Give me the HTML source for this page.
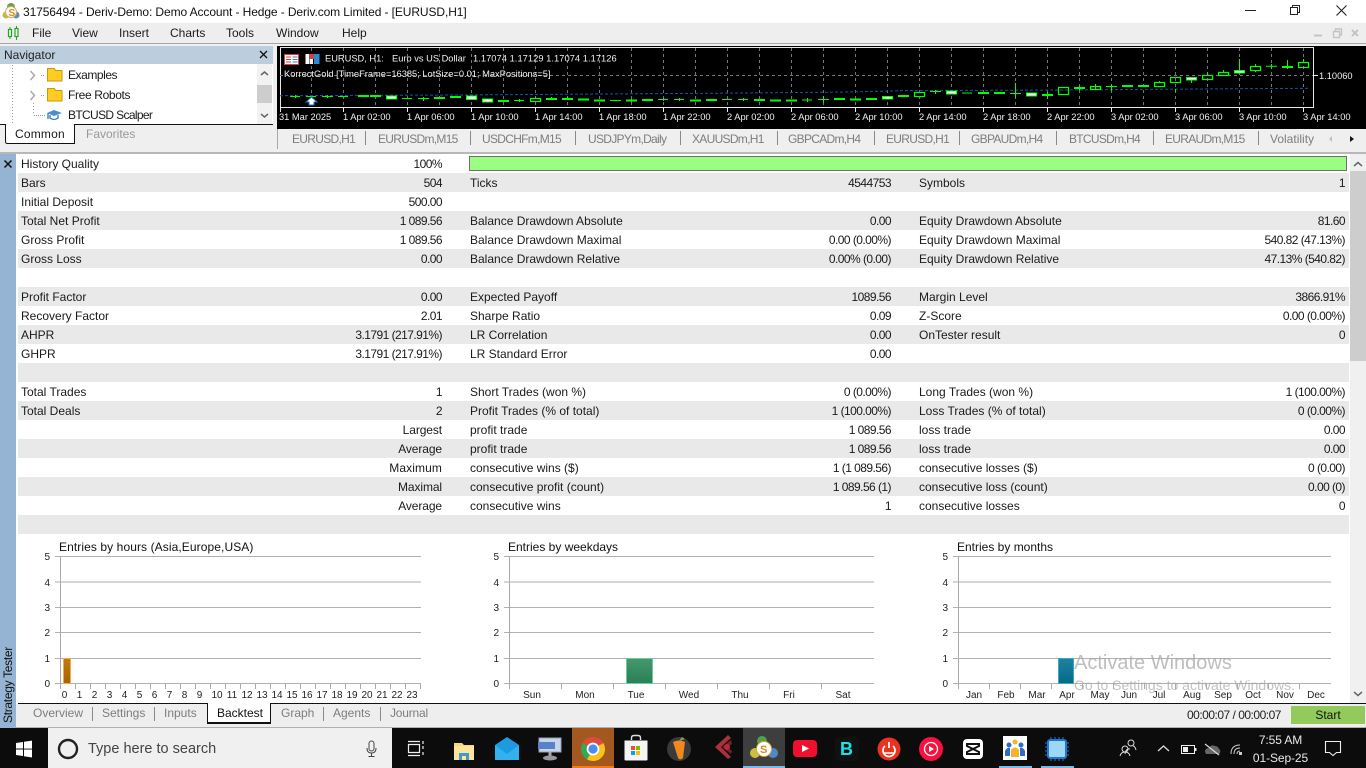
<!DOCTYPE html>
<html><head><meta charset="utf-8"><title>Strategy Tester</title>
<style>
*{box-sizing:border-box}
html,body{margin:0;padding:0;width:1366px;height:768px;overflow:hidden;background:#fff;font-family:"Liberation Sans",sans-serif;font-size:12px;color:#1a1a1a}
.a{position:absolute;white-space:nowrap}
.t{position:absolute;white-space:nowrap;line-height:16px}
.g{color:#7d7d7d}
.k{letter-spacing:-.7px}
.sep{position:absolute;width:1px;background:#8a8a8a}
.r{position:absolute;left:18px;width:1331px;height:19px;line-height:19px}
.r.o{background:#e9e9e9}
.r span{position:absolute;white-space:nowrap;top:1px}
.l1{left:3px}.v1{right:907px;letter-spacing:-.55px}.l2{left:452px}.v2{right:458px;letter-spacing:-.55px}.l3{left:901px}.v3{right:4px;letter-spacing:-.55px}
.r span.w{letter-spacing:-.1px}
svg{position:absolute;left:0;top:0}
svg text{font-family:"Liberation Sans",sans-serif}
</style></head><body>

<div class="a" style="left:0;top:0;width:1366px;height:23px;background:#fff"></div>
<svg width="1366" height="44" style="z-index:2">
 <circle cx="11" cy="7" r="4" fill="#6a9e5a"/><circle cx="6" cy="15" r="3.500" fill="#c4b84a"/><circle cx="16" cy="15" r="3.500" fill="#5f8fbf"/><circle cx="11" cy="12" r="5.500" fill="#fff" stroke="#e0a850"/>
 <text x="8.500" y="16" font-size="10" font-weight="bold" fill="#d58a20">S</text>
 <path d="M1245 10.500h11" stroke="#222" stroke-width="1"/>
 <path d="M1290.500 7.500h7v7h-7zM1292.500 7.500v-2h7v7h-2" fill="none" stroke="#222"/>
 <path d="M1336.500 5.500l10 10M1346.500 5.500l-10 10" stroke="#222" stroke-width="1.100"/>
</svg>
<div class="t" style="left:23px;top:4px;color:#111;letter-spacing:-.1px">31756494 - Deriv-Demo: Demo Account - Hedge - Deriv.com Limited - [EURUSD,H1]</div>

<div class="a" style="left:0;top:23px;width:1366px;height:20px;background:#eeeeee"></div>
<div class="a" style="left:0;top:43px;width:1366px;height:1px;background:#a8a8a8"></div>
<div class="a" style="left:0;top:44px;width:1366px;height:110px;background:#efefef"></div>
<svg width="30" height="44" style="z-index:2">
 <path d="M10 27v12M16.500 26v14" stroke="#1fa51f"/><rect x="8.500" y="29.500" width="3" height="7" fill="#fff" stroke="#1fa51f" stroke-width="1.200"/><rect x="15" y="28.500" width="3" height="8" fill="#fff" stroke="#1fa51f" stroke-width="1.200"/>
</svg>
<div class="t" style="left:32px;top:25px">File</div>
<div class="t" style="left:72px;top:25px">View</div>
<div class="t" style="left:119px;top:25px">Insert</div>
<div class="t" style="left:170px;top:25px">Charts</div>
<div class="t" style="left:226px;top:25px">Tools</div>
<div class="t" style="left:276px;top:25px">Window</div>
<div class="t" style="left:342px;top:25px">Help</div>
<svg width="1366" height="44" style="z-index:2">
 <path d="M1314 35.500h8" stroke="#c4c4c4" stroke-width="2"/>
 <path d="M1333.500 31.500h6v6h-6zM1335.500 31v-2h6v6h-2" fill="none" stroke="#c4c4c4" stroke-width="1.400"/>
 <path d="M1352 30l6 6M1358 30l-6 6" stroke="#c4c4c4" stroke-width="2"/>
</svg>

<!-- Navigator -->
<div class="a" style="left:0;top:46px;width:273px;height:18px;background:#bccddd"></div>
<div class="t" style="left:4px;top:47px;color:#222">Navigator</div>
<svg width="280" height="150" style="z-index:2">
 <path d="M260 51l7 7M267 51l-7 7" stroke="#111" stroke-width="1.300"/>
</svg>
<div class="a" style="left:0;top:64px;width:273px;height:60px;background:#fff"></div>
<div class="a" style="left:257px;top:64px;width:15px;height:60px;background:#f2f2f2"></div>
<div class="a" style="left:257px;top:85px;width:15px;height:18px;background:#cdcdcd"></div>
<svg width="280" height="150" style="z-index:2">
 <path d="M12.500 65v60M33.500 103v12" stroke="#999" stroke-dasharray="1 2"/>
 <path d="M30.500 71l4 4.500-4 4.500M30.500 91l4 4.500-4 4.500" fill="none" stroke="#aaa" stroke-width="1.500"/>
 <path d="M41 75.500h3M41 95.500h3M34 115.500h12" stroke="#999" stroke-dasharray="1 1"/>
 <path d="M47.500 68.500h7l1 2h6.500v10.500h-14.500z" fill="#ffcc22" stroke="#c89a10"/>
 <path d="M47.500 88.500h7l1 2h6.500v10.500h-14.500z" fill="#ffcc22" stroke="#c89a10"/>
 <path d="M47 113l7-3 8 3-8 3z" fill="#4a90c8"/><path d="M50 115v3q4 3 8 0v-3M48 113v6" fill="none" stroke="#2f78b8" stroke-width="1.300"/>
 <path d="M261 75l3.500-3 3.500 3" fill="none" stroke="#666" stroke-width="1.500"/>
 <path d="M261 114l3.500 3 3.500-3" fill="none" stroke="#666" stroke-width="1.500"/>
 <path d="M0 124.500h273" stroke="#111"/>
 <path d="M5.500 124.500v17q0 2 2 2h67v-19" fill="#fff" stroke="#111"/>
 <path d="M6 124h68v1h-68z" fill="#fff"/>
</svg>
<div class="t" style="left:68px;top:67px;z-index:3;letter-spacing:-.45px">Examples</div>
<div class="t" style="left:68px;top:87px;z-index:3;letter-spacing:-.35px">Free Robots</div>
<div class="t" style="left:68px;top:107px;z-index:3;letter-spacing:-.65px">BTCUSD Scalper</div>
<div class="t" style="left:15px;top:126px;z-index:3;letter-spacing:.2px">Common</div>
<div class="t g" style="left:86px;top:126px;z-index:3;color:#999">Favorites</div>

<!-- Chart -->
<div class="a" style="left:277px;top:46px;width:1089px;height:83px;background:#000"></div>
<svg width="1366" height="130" style="z-index:2" font-size="9.300">
 <path d="M280.500 47.500H1313.500V107.500H280.500z" fill="none" stroke="#e8e8e8"/>
 <path d="M280 75.500H1313" stroke="#777" stroke-dasharray="3 3"/>
 <path stroke="#6d7580" stroke-dasharray="3 3" d="M311.500 48v59M343.500 48v59M375.500 48v59M407.500 48v59M439.500 48v59M471.500 48v59M503.500 48v59M535.500 48v59M567.500 48v59M599.500 48v59M631.500 48v59M663.500 48v59M695.500 48v59M727.500 48v59M759.500 48v59M791.500 48v59M823.500 48v59M855.500 48v59M887.500 48v59M919.500 48v59M951.500 48v59M983.500 48v59M1015.500 48v59M1047.500 48v59M1079.500 48v59M1111.500 48v59M1143.500 48v59M1175.500 48v59M1207.500 48v59M1239.500 48v59M1271.500 48v59M1303.500 48v59"/>
 <path d="M280 95.700L460 95L745 93L850 92L900 90.700L1060 90L1240 88.700L1310 88.300" fill="none" stroke="#0b5aa8" stroke-dasharray="3 2"/>
 <path stroke="#e8e8e8" d="M280.500 107v5M343.500 107v5M407.500 107v5M471.500 107v5M535.500 107v5M599.500 107v5M663.500 107v5M727.500 107v5M791.500 107v5M855.500 107v5M919.500 107v5M983.500 107v5M1047.500 107v5M1111.500 107v5M1175.500 107v5M1239.500 107v5M1303.500 107v5M1313 75.500h5"/>
 <!-- thin candles -->
 <path stroke="#00ff00" fill="none" d="M290 96.500h10M295.500 95v3M306 96.500h10M322 96.500h11M327.500 95v3M338 96.500h10M402 98.500h10M418 98.500h11M423.500 97v4M514 100.500h10M519.500 99v3M610 100.500h11M658 99.500h10M663.500 98v3M674 99.500h10M679.500 98v3M722 99.500h10M738 99.500h10M743.500 98v3M802 100h10M807.500 98v4M818 99.500h11M823.500 96v7M930 91.500h11M935.500 90v4M962 93h10M1010 93.500h11M1015.500 83v15M1106 86.500h11M1111.500 84v7M1266 66.300h11M1271.500 64v5M1287.500 60v9M551.500 97v3M567.500 97v3M535.500 97v2M631.500 99v3M1079.500 86v4M1047.500 92v7M1095.500 84v6M1159.500 81v2M1175.500 89v3M1191.500 82v1M1191.500 80v3M1207.500 72v3M1223.500 70v3M1239.500 59v11M1255.500 64v2M1255.500 70v2M1303.500 59v4"/>
 <!-- thick candles -->
 <path stroke="#00ff00" stroke-width="2" d="M358 96h11M370 96h11M434 98h11M450 97h11M498 101h11M546 99h11M562 99h11M578 99.500h11M594 100.500h11M626 100.500h11M642 100h11M690 100.500h11M706 100h11M754 100h11M770 100.500h11M786 100.500h11M834 99h11M850 99.500h11M866 99h11M898 96h11M978 93h11M994 93h11M1042 95h11M1074 88h11M1122 86h11M1138 86h11M1282 67h11"/>
 <!-- hollow -->
 <g fill="none" stroke="#00ff00" stroke-width="1.200">
  <rect x="530.500" y="98.500" width="10" height="3"/><rect x="914.500" y="92.500" width="10" height="4"/>
  <rect x="1058.500" y="87.500" width="10" height="7"/><rect x="1090.500" y="86.500" width="10" height="3"/>
  <rect x="1154.500" y="82.500" width="10" height="4"/><rect x="1170.500" y="77.500" width="10" height="5"/>
  <rect x="1202.500" y="75.500" width="10" height="4"/>
  <rect x="1218.500" y="72.500" width="10" height="3"/><rect x="1250.500" y="66.500" width="10" height="4"/>
  <rect x="1298.500" y="62.500" width="10" height="5"/>
 </g>
 <!-- white filled -->
 <g fill="#fff" stroke="#00ff00">
  <rect x="386.500" y="96" width="10" height="3"/><rect x="466.500" y="96" width="10" height="3.500"/><rect x="482.500" y="99" width="10" height="3"/>
  <rect x="882.500" y="96.500" width="10" height="2.500"/><rect x="946.500" y="91" width="10" height="3"/><rect x="1026.500" y="93" width="10" height="3"/>
  <rect x="1186.500" y="77.500" width="10" height="2.500"/><rect x="1234.500" y="70.500" width="10" height="2.500"/>
 </g>
 <path d="M311.500 97l5.500 5h-3v3h-5v-3h-3z" fill="#fff" stroke="#1b6fc0"/>
 <rect x="284.500" y="54.500" width="14" height="10" fill="#fff" stroke="#d04040"/><path d="M286 57h5M286 59.500h5M286 62h5" stroke="#d04040"/><path d="M292.500 57h5M292.500 59.500h5M292.500 62h5" stroke="#3a78c8"/>
 <rect x="305.500" y="54" width="4" height="10" fill="#fff"/><rect x="309" y="54" width="5" height="5" fill="#d04040"/><rect x="314" y="54" width="5.500" height="10" fill="#2f88d0"/><rect x="310" y="59" width="3" height="5" fill="#fff"/>
 <g fill="#f0f0f0">
  <text x="325" y="61.500">EURUSD, H1:</text>
  <text x="392" y="61.500">Euro vs US Dollar</text>
  <text x="473" y="61.500" letter-spacing=".05">1.17074 1.17129 1.17074 1.17126</text>
  <text x="284" y="77" letter-spacing="0">KorrectGold [TimeFrame=16385; LotSize=0.01; MaxPositions=5]</text>
  <text x="1319" y="79">1.10060</text>
  <text x="279" y="120">31 Mar 2025</text>
  <text x="343" y="120">1 Apr 02:00</text><text x="407" y="120">1 Apr 06:00</text><text x="471" y="120">1 Apr 10:00</text><text x="535" y="120">1 Apr 14:00</text><text x="599" y="120">1 Apr 18:00</text><text x="663" y="120">1 Apr 22:00</text>
  <text x="727" y="120">2 Apr 02:00</text><text x="791" y="120">2 Apr 06:00</text><text x="855" y="120">2 Apr 10:00</text><text x="919" y="120">2 Apr 14:00</text><text x="983" y="120">2 Apr 18:00</text><text x="1047" y="120">2 Apr 22:00</text>
  <text x="1111" y="120">3 Apr 02:00</text><text x="1175" y="120">3 Apr 06:00</text><text x="1239" y="120">3 Apr 10:00</text><text x="1303" y="120">3 Apr 14:00</text>
 </g>
</svg>

<!-- Chart tabs -->
<div class="sep" style="left:277px;top:129px;height:20px;background:#aaa"></div>
<div class="t g k" style="left:292px;top:131px">EURUSD,H1</div><div class="sep" style="left:365px;top:131px;height:14px"></div>
<div class="t g k" style="left:378px;top:131px">EURUSDm,M15</div><div class="sep" style="left:470px;top:131px;height:14px"></div>
<div class="t g k" style="left:482px;top:131px">USDCHFm,M15</div><div class="sep" style="left:575px;top:131px;height:14px"></div>
<div class="t g k" style="left:588px;top:131px">USDJPYm,Daily</div><div class="sep" style="left:680px;top:131px;height:14px"></div>
<div class="t g k" style="left:692px;top:131px">XAUUSDm,H1</div><div class="sep" style="left:777px;top:131px;height:14px"></div>
<div class="t g k" style="left:788px;top:131px">GBPCADm,H4</div><div class="sep" style="left:874px;top:131px;height:14px"></div>
<div class="t g k" style="left:886px;top:131px">EURUSD,H1</div><div class="sep" style="left:959px;top:131px;height:14px"></div>
<div class="t g k" style="left:971px;top:131px">GBPAUDm,H4</div><div class="sep" style="left:1056px;top:131px;height:14px"></div>
<div class="t g k" style="left:1069px;top:131px">BTCUSDm,H4</div><div class="sep" style="left:1153px;top:131px;height:14px"></div>
<div class="t g k" style="left:1165px;top:131px">EURAUDm,M15</div><div class="sep" style="left:1258px;top:131px;height:14px"></div>
<div class="t g" style="left:1270px;top:131px">Volatility</div>
<svg width="1366" height="150" style="z-index:2"><path d="M1332 136l-3 3 3 3z" fill="#c0c0c0"/><path d="M1350 136l4 3-4 3z" fill="#111"/></svg>
<div class="a" style="left:0;top:152px;width:1366px;height:2px;background:#b8b8b8"></div>

<!-- Left strip -->
<div class="a" style="left:0;top:154px;width:16px;height:574px;background:#95b3d3"></div>
<svg width="20" height="180" style="z-index:2"><path d="M4.500 160.500l7 7M11.500 160.500l-7 7" stroke="#111" stroke-width="1.500"/></svg>
<div class="a" style="left:-40px;top:677px;width:96px;height:16px;line-height:16px;text-align:center;transform:rotate(-90deg);color:#111;z-index:2;letter-spacing:-.3px">Strategy Tester</div>

<!-- Table -->
<div class="a" style="left:16px;top:154px;width:1350px;height:549px;background:#fff"></div>
<div class="r" style="top:154px"><span class="l1">History Quality</span><span class="v1">100%</span></div>
<div class="a" style="left:469px;top:156px;width:878px;height:15px;background:#98ff80;border:1px solid #6f6f6f"></div>
<div class="r o" style="top:173px"><span class="l1">Bars</span><span class="v1">504</span><span class="l2">Ticks</span><span class="v2">4544753</span><span class="l3">Symbols</span><span class="v3">1</span></div>
<div class="r" style="top:192px"><span class="l1">Initial Deposit</span><span class="v1">500.00</span></div>
<div class="r o" style="top:211px"><span class="l1">Total Net Profit</span><span class="v1">1 089.56</span><span class="l2">Balance Drawdown Absolute</span><span class="v2">0.00</span><span class="l3">Equity Drawdown Absolute</span><span class="v3">81.60</span></div>
<div class="r" style="top:230px"><span class="l1">Gross Profit</span><span class="v1">1 089.56</span><span class="l2">Balance Drawdown Maximal</span><span class="v2">0.00 (0.00%)</span><span class="l3">Equity Drawdown Maximal</span><span class="v3">540.82 (47.13%)</span></div>
<div class="r o" style="top:249px"><span class="l1">Gross Loss</span><span class="v1">0.00</span><span class="l2">Balance Drawdown Relative</span><span class="v2">0.00% (0.00)</span><span class="l3">Equity Drawdown Relative</span><span class="v3">47.13% (540.82)</span></div>
<div class="r o" style="top:287px"><span class="l1">Profit Factor</span><span class="v1">0.00</span><span class="l2">Expected Payoff</span><span class="v2">1089.56</span><span class="l3">Margin Level</span><span class="v3">3866.91%</span></div>
<div class="r" style="top:306px"><span class="l1">Recovery Factor</span><span class="v1">2.01</span><span class="l2">Sharpe Ratio</span><span class="v2">0.09</span><span class="l3">Z-Score</span><span class="v3">0.00 (0.00%)</span></div>
<div class="r o" style="top:325px"><span class="l1">AHPR</span><span class="v1">3.1791 (217.91%)</span><span class="l2">LR Correlation</span><span class="v2">0.00</span><span class="l3">OnTester result</span><span class="v3">0</span></div>
<div class="r" style="top:344px"><span class="l1">GHPR</span><span class="v1">3.1791 (217.91%)</span><span class="l2">LR Standard Error</span><span class="v2">0.00</span></div>
<div class="r o" style="top:363px"></div>
<div class="r" style="top:382px"><span class="l1">Total Trades</span><span class="v1">1</span><span class="l2">Short Trades (won %)</span><span class="v2">0 (0.00%)</span><span class="l3">Long Trades (won %)</span><span class="v3">1 (100.00%)</span></div>
<div class="r o" style="top:401px"><span class="l1">Total Deals</span><span class="v1">2</span><span class="l2">Profit Trades (% of total)</span><span class="v2">1 (100.00%)</span><span class="l3">Loss Trades (% of total)</span><span class="v3">0 (0.00%)</span></div>
<div class="r" style="top:420px"><span class="v1 w">Largest</span><span class="l2">profit trade</span><span class="v2">1 089.56</span><span class="l3">loss trade</span><span class="v3">0.00</span></div>
<div class="r o" style="top:439px"><span class="v1 w">Average</span><span class="l2">profit trade</span><span class="v2">1 089.56</span><span class="l3">loss trade</span><span class="v3">0.00</span></div>
<div class="r" style="top:458px"><span class="v1 w" style="letter-spacing:.1px">Maximum</span><span class="l2">consecutive wins ($)</span><span class="v2">1 (1 089.56)</span><span class="l3">consecutive losses ($)</span><span class="v3">0 (0.00)</span></div>
<div class="r o" style="top:477px"><span class="v1 w">Maximal</span><span class="l2">consecutive profit (count)</span><span class="v2">1 089.56 (1)</span><span class="l3">consecutive loss (count)</span><span class="v3">0.00 (0)</span></div>
<div class="r" style="top:496px"><span class="v1 w">Average</span><span class="l2">consecutive wins</span><span class="v2">1</span><span class="l3">consecutive losses</span><span class="v3">0</span></div>
<div class="r o" style="top:515px"></div>

<!-- Scrollbar -->
<div class="a" style="left:1350px;top:154px;width:16px;height:549px;background:#f0f0f0"></div>
<div class="a" style="left:1350px;top:171px;width:16px;height:190px;background:#cdcdcd"></div>

<!-- Charts -->
<svg width="1366" height="768" style="z-index:2" font-size="10" fill="#222">
 <path d="M1354 166l4-3.500 4 3.500M1354 692l4 3.500 4-3.500" fill="none" stroke="#666" stroke-width="1.500"/>
 <defs>
  <linearGradient id="o" x1="0" y1="0" x2="0" y2="1"><stop offset="0" stop-color="#c27a10"/><stop offset="1" stop-color="#a96400"/></linearGradient>
  <linearGradient id="gr" x1="0" y1="0" x2="0" y2="1"><stop offset="0" stop-color="#46996d"/><stop offset="1" stop-color="#2a7f55"/></linearGradient>
  <linearGradient id="bl" x1="0" y1="0" x2="0" y2="1"><stop offset="0" stop-color="#1f829f"/><stop offset="1" stop-color="#046a88"/></linearGradient>
 </defs>
 <!-- chart 1 -->
 <path d="M55 556.500H421M55 607.500H421M55 632.500H421M55 658.500H421M55 683.500H421" stroke="#b0b0b0"/><path d="M55 582H421" stroke="#d6d6d6" stroke-width="2"/>
 <path stroke="#aaa" d="M60.500 556v133M75.500 684v5M90.500 684v5M105.500 684v5M120.500 684v5M135.500 684v5M150.500 684v5M165.500 684v5M180.500 684v5M195.500 684v5M210.500 684v5M225.500 684v5M240.500 684v5M255.500 684v5M270.500 684v5M285.500 684v5M300.500 684v5M315.500 684v5M330.500 684v5M345.500 684v5M360.500 684v5M375.500 684v5M390.500 684v5M405.500 684v5M420.500 684v5"/>
 <rect x="63.500" y="658.500" width="7" height="25" fill="url(#o)" stroke="#f0ad50"/>
 <g text-anchor="end"><text x="50" y="560">5</text><text x="50" y="586">4</text><text x="50" y="611">3</text><text x="50" y="636">2</text><text x="50" y="662">1</text><text x="50" y="687">0</text></g>
 <g text-anchor="middle"><text x="64.500" y="698">0</text><text x="79.500" y="698">1</text><text x="94.500" y="698">2</text><text x="109.500" y="698">3</text><text x="124.500" y="698">4</text><text x="139.500" y="698">5</text><text x="154.500" y="698">6</text><text x="169.500" y="698">7</text><text x="184.500" y="698">8</text><text x="199.500" y="698">9</text><text x="217" y="698">10</text><text x="232" y="698">11</text><text x="247" y="698">12</text><text x="262" y="698">13</text><text x="277" y="698">14</text><text x="292" y="698">15</text><text x="307" y="698">16</text><text x="322" y="698">17</text><text x="337" y="698">18</text><text x="352" y="698">19</text><text x="367" y="698">20</text><text x="382" y="698">21</text><text x="397" y="698">22</text><text x="412" y="698">23</text></g>
 <text x="59" y="551" font-size="12" fill="#111" letter-spacing=".09">Entries by hours (Asia,Europe,USA)</text>
 <!-- chart 2 -->
 <path d="M504 556.500H874M504 607.500H874M504 632.500H874M504 658.500H874M504 683.500H874" stroke="#b0b0b0"/><path d="M504 582H874" stroke="#d6d6d6" stroke-width="2"/>
 <path stroke="#aaa" d="M509.500 556v133M561.500 684v5M613.500 684v5M665.500 684v5M717.500 684v5M769.500 684v5M821.500 684v5"/>
 <rect x="626.500" y="658.500" width="26" height="25" fill="url(#gr)" stroke="#6ccb9b"/>
 <g text-anchor="end"><text x="499" y="560">5</text><text x="499" y="586">4</text><text x="499" y="611">3</text><text x="499" y="636">2</text><text x="499" y="662">1</text><text x="499" y="687">0</text></g>
 <g text-anchor="middle"><text x="532" y="698">Sun</text><text x="585" y="698">Mon</text><text x="636" y="698">Tue</text><text x="689" y="698">Wed</text><text x="740" y="698">Thu</text><text x="789" y="698">Fri</text><text x="843" y="698">Sat</text></g>
 <text x="508" y="551" font-size="12" fill="#111">Entries by weekdays</text>
 <!-- chart 3 -->
 <path d="M953 556.500H1331M953 607.500H1331M953 632.500H1331M953 658.500H1331M953 683.500H1331" stroke="#b0b0b0"/><path d="M953 582H1331" stroke="#d6d6d6" stroke-width="2"/>
 <path stroke="#aaa" d="M958.500 556v133M989.500 684v5M1020.500 684v5M1051.500 684v5M1082.500 684v5M1113.500 684v5M1144.500 684v5M1175.500 684v5M1206.500 684v5M1237.500 684v5M1268.500 684v5M1299.500 684v5"/>
 <rect x="1058.500" y="658.500" width="15" height="25" fill="url(#bl)" stroke="#38a9c6"/>
 <g text-anchor="end"><text x="948" y="560">5</text><text x="948" y="586">4</text><text x="948" y="611">3</text><text x="948" y="636">2</text><text x="948" y="662">1</text><text x="948" y="687">0</text></g>
 <g text-anchor="middle"><text x="974" y="698">Jan</text><text x="1006" y="698">Feb</text><text x="1037" y="698">Mar</text><text x="1067" y="698">Apr</text><text x="1100" y="698">May</text><text x="1129" y="698">Jun</text><text x="1159" y="698">Jul</text><text x="1192" y="698">Aug</text><text x="1223" y="698">Sep</text><text x="1253" y="698">Oct</text><text x="1285" y="698">Nov</text><text x="1316" y="698">Dec</text></g>
 <text x="957" y="551" font-size="12" fill="#111">Entries by months</text>
 <text x="1074" y="669" font-size="20" fill="#a8a8a8" fill-opacity=".75">Activate Windows</text>
 <text x="1074" y="690" font-size="14" fill="#a8a8a8" fill-opacity=".7">Go to Settings to activate Windows.</text>
</svg>

<!-- Bottom tabs -->
<div class="a" style="left:16px;top:704px;width:1350px;height:23px;background:#eeeeee;z-index:3"></div>
<div class="a" style="left:18px;top:703px;width:1348px;height:1px;background:#111;z-index:3"></div>
<div class="a" style="left:207px;top:703px;width:64px;height:21px;background:#fff;border:1px solid #111;border-top:0;border-bottom-width:2px;z-index:4"></div>
<div style="position:absolute;z-index:5;left:0;top:0">
<div class="t g" style="left:33px;top:705px">Overview</div><div class="sep" style="left:92px;top:707px;height:14px"></div>
<div class="t g" style="left:102px;top:705px">Settings</div><div class="sep" style="left:154px;top:707px;height:14px"></div>
<div class="t g" style="left:164px;top:705px">Inputs</div>
<div class="t" style="left:217px;top:705px;color:#111">Backtest</div>
<div class="t g" style="left:281px;top:705px">Graph</div><div class="sep" style="left:323px;top:707px;height:14px"></div>
<div class="t g" style="left:333px;top:705px">Agents</div><div class="sep" style="left:380px;top:707px;height:14px"></div>
<div class="t g" style="left:390px;top:705px;letter-spacing:-.2px">Journal</div>
<div class="t" style="left:1187px;top:707px;color:#222;letter-spacing:-.5px">00:00:07 / 00:00:07</div>
<div class="a" style="left:1291px;top:706px;width:74px;height:18px;line-height:18px;background:#92cb5c;text-align:center;color:#111">Start</div>
</div>
<div class="a" style="left:16px;top:727px;width:1350px;height:1px;background:#b0b0b0;z-index:5"></div>

<!-- Taskbar -->
<div class="a" style="left:0;top:728px;width:1366px;height:40px;background:#0c0c0c;z-index:6"></div>
<div class="a" style="left:48px;top:728px;width:344px;height:40px;background:#f0f0f0;z-index:7"></div>
<div class="a" style="left:572px;top:728px;width:42px;height:40px;background:#a3581f;z-index:7"></div>
<div class="a" style="left:572px;top:766px;width:42px;height:2px;background:#f37a10;z-index:7"></div>
<div class="a" style="left:743px;top:728px;width:42px;height:40px;background:#3e3e3e;z-index:7"></div>
<div class="a" style="left:743px;top:766px;width:42px;height:2px;background:#76b9ed;z-index:7"></div>
<div class="a" style="left:999px;top:766px;width:33px;height:2px;background:#76b9ed;z-index:7"></div>
<div class="a" style="left:1041px;top:766px;width:33px;height:2px;background:#76b9ed;z-index:7"></div>
<div class="a" style="left:88px;top:739px;height:20px;line-height:20px;font-size:14.500px;color:#444;z-index:8">Type here to search</div>
<div class="a" style="left:1240px;top:731px;width:81px;text-align:center;line-height:18px;color:#e8e8e8;z-index:8;letter-spacing:-.1px">7:55 AM<br>01-Sep-25</div>
<svg width="1366" height="768" style="z-index:8">
 <path d="M16 743l7-1v6.500h-7zM24 741.800l8-1.200v8h-8zM16 749.500h7v6.500l-7-1zM24 749.500h8v8l-8-1.200z" fill="#fff"/>
 <circle cx="68" cy="749" r="9" fill="none" stroke="#222" stroke-width="2.400"/>
 <rect x="369" y="741" width="5" height="10" rx="2.500" fill="none" stroke="#444"/><path d="M367 748q0 5 4.500 5t4.500-5M371.500 753v3M368.500 756.500h6" fill="none" stroke="#444"/>
 <path d="M408.500 744.500h11v8h-11zM408 741.500h12M408 755.500h12M423 741v3M423 746v3M423 752v3" fill="none" stroke="#eee" stroke-width="1.200"/>
 <!-- explorer -->
 <path d="M454 743h8l2 2h10v15h-20z" fill="#f8d775"/><path d="M454 746h20v14h-20z" fill="#fbe59a"/><path d="M459 753h10v7h-10z" fill="#3d9ad8"/><path d="M462 756h4v4h-4z" fill="#fbe59a"/>
 <!-- mail -->
 <path d="M495 745l12-8 12 8v15h-24z" fill="#1e9be0"/><path d="M495 745l12 9 12-9v15h-24z" fill="#33b0ee"/>
 <!-- network -->
 <rect x="539" y="738" width="22" height="14" fill="#c8d4e8" stroke="#8fa0c0"/><rect x="538" y="742" width="17" height="7" fill="#5a82c8"/><path d="M550 752v4" stroke="#aaa" stroke-width="3"/><ellipse cx="550" cy="758" rx="7" ry="2.500" fill="#999"/>
 <!-- chrome -->
 <circle cx="593" cy="749" r="12" fill="#dd4b3e"/><path d="M593 749L603.400 743A12 12 0 0 1 587 759.400z" fill="#f8c21c"/><path d="M593 749L587 759.400A12 12 0 0 1 582.600 743z" fill="#34a853"/><circle cx="593" cy="749" r="5.500" fill="#4a8cf0" stroke="#fff" stroke-width="1.800"/>
 <!-- store -->
 <path d="M624.500 740.500h23v19q0 1-1 1h-21q-1 0-1-1z" fill="#f4f4f4"/><path d="M631.500 740v-2q0-2.500 2.500-2.500h4q2.500 0 2.500 2.500v2" fill="none" stroke="#ddd" stroke-width="1.400"/>
 <rect x="631" y="746" width="4" height="4" fill="#f25022"/><rect x="636" y="746" width="4" height="4" fill="#7fba00"/><rect x="631" y="751" width="4" height="4" fill="#00a4ef"/><rect x="636" y="751" width="4" height="4" fill="#ffb900"/>
 <!-- FL -->
 <circle cx="679" cy="749" r="12" fill="#3a3a3a"/><path d="M673 742q6-3 12 0l-2 16q-3 3-5 0z" fill="#f08820"/><path d="M679 741l3-4 3 2z" fill="#7bb03a"/>
 <!-- cubase -->
 <path d="M731 738l-10 9 10 10-3 2-13-12 13-12z" fill="#a8323c"/><path d="M722 747l9-7 1 4-5 3 5 4-1 3z" fill="#6b2530"/><circle cx="727" cy="747" r="3" fill="#c02838"/>
 <!-- mt5 -->
 <circle cx="762" cy="741" r="5" fill="#4fa04f"/><circle cx="755" cy="753" r="5" fill="#c9c040"/><circle cx="773" cy="753" r="5" fill="#4f8ac8"/><circle cx="764" cy="749" r="7.500" fill="#fff" stroke="#e0a030"/>
 <text x="760" y="753" font-size="11" font-weight="bold" fill="#d58a20">S</text>
 <!-- YT -->
 <rect x="793" y="740" width="24" height="17" rx="4" fill="#f0102e"/><path d="M802 745l7 3.500-7 3.500z" fill="#fff"/>
 <!-- B -->
 <rect x="835" y="737" width="24" height="24" rx="4" fill="#111"/><text x="840" y="755" font-size="18" font-weight="bold" fill="#12e6ea">B</text>
 <!-- timer -->
 <circle cx="889" cy="749" r="11.500" fill="#e9331e"/><path d="M885 746a6 6 0 1 0 8 0M889 742v6" fill="none" stroke="#fff" stroke-width="1.700"/><path d="M884 753h10" stroke="#fff" stroke-width="1.500"/>
 <!-- yt music -->
 <circle cx="931" cy="749" r="12" fill="#f6113f"/><circle cx="931" cy="749" r="6.500" fill="none" stroke="#fff" stroke-width="1.300"/><path d="M929 746l5 3-5 3z" fill="#fff"/>
 <!-- capcut -->
 <rect x="963" y="739" width="20" height="20" rx="4" fill="#fff"/><path d="M967 744h12v2l-6 3 6 3v2h-12v-2l6-3-6-3z" fill="none" stroke="#111" stroke-width="2"/>
 <!-- people -->
 <rect x="1003" y="736" width="24" height="24" fill="#fff"/><circle cx="1015" cy="742" r="2.500" fill="#f3b32b"/><circle cx="1009" cy="745" r="2.500" fill="#2e6dc4"/><circle cx="1021" cy="745" r="2.500" fill="#2e6dc4"/><path d="M1011 757v-7q4-5 8 0v7z" fill="#f3b32b"/><path d="M1005 756v-5q2-4 5-3v8zM1025 756v-5q-2-4-5-3v8z" fill="#2e6dc4"/>
 <!-- chip -->
 <rect x="1048" y="740" width="18" height="18" rx="2" fill="#9dd6f7" stroke="#1f78d0" stroke-width="2"/><path d="M1051 737v3M1055 737v3M1059 737v3M1063 737v3M1051 758v3M1055 758v3M1059 758v3M1063 758v3M1045 743h3M1045 747h3M1045 751h3M1045 755h3M1066 743h3M1066 747h3M1066 751h3M1066 755h3" stroke="#1f78d0"/>
 <!-- tray -->
 <circle cx="1131" cy="743" r="3" fill="none" stroke="#ddd"/><path d="M1125 754q1-6 5-5M1136 750q-1-4-3-4" fill="none" stroke="#ddd"/><circle cx="1125" cy="749" r="3" fill="none" stroke="#ddd"/><path d="M1120 756q1-4 5-4t5 4" fill="none" stroke="#ddd"/>
 <path d="M1158 751l5.500-5 5.500 5" fill="none" stroke="#ddd" stroke-width="1.300"/>
 <rect x="1181.500" y="745.500" width="13" height="8" fill="none" stroke="#eee"/><rect x="1183" y="747" width="5" height="5" fill="#eee"/><rect x="1195" y="748" width="1.500" height="3" fill="#eee"/>
 <path d="M1205 752q0-4 4-4 2-4 6-2 3 0 4 3 2 1 1 4l-1 1h-13z" fill="#666"/><path d="M1205 744l14 11" stroke="#ddd" stroke-width="1.200"/>
 <path d="M1231 754q0-9 9-9M1234 754q0-6 6-6M1237 754q0-3 3-3" fill="none" stroke="#ccc"/><path d="M1239 755h3v-3h-3z" fill="#ccc"/>
 <path d="M1325.500 741.500h15v11h-4l-3.500 3-3.500-3h-4z" fill="none" stroke="#eee" stroke-width="1.100"/>
</svg>
</body></html>
